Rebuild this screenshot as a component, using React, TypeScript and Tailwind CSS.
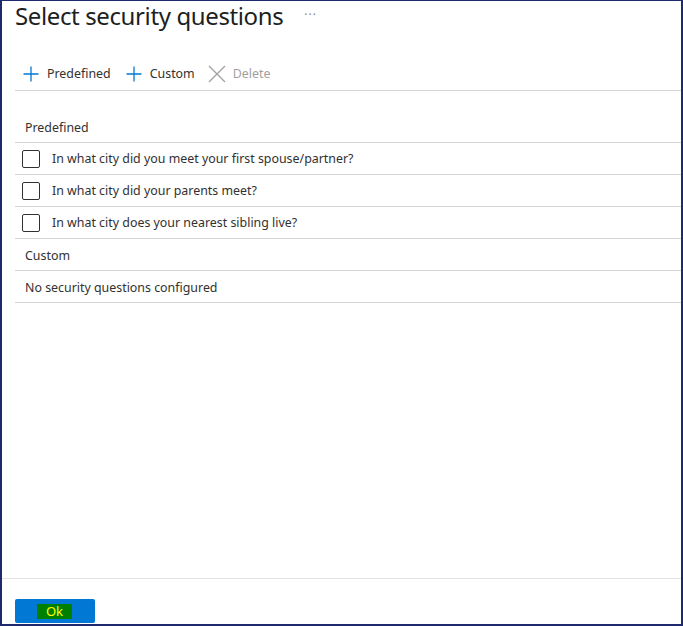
const questions = [
  "In what city did you meet your first spouse/partner?",
  "In what city did your parents meet?",
  "In what city does your nearest sibling live?",
];

const font = { fontFamily: '"Noto Sans", "Open Sans", sans-serif' };

const PlusIcon = () => (
  <svg width="16" height="16" viewBox="0 0 16 16" className="shrink-0">
    <path d="M8 0.5V15.5M0.5 8H15.5" stroke="#0078d4" strokeWidth="1.3" fill="none" />
  </svg>
);

const XIcon = () => (
  <svg width="18" height="18" viewBox="0 0 18 18" className="shrink-0">
    <path d="M1 1L17 17M17 1L1 17" stroke="#a19f9d" strokeWidth="1.2" fill="none" />
  </svg>
);

const App = () => {
  return (
    <div
      className="h-screen w-full flex flex-col bg-white text-[#323130] border-t border-l-2 border-r-2 border-b-2 border-[#1f2a6e] overflow-hidden"
      style={font}
    >
      {/* Header */}
      <div className="flex items-center pl-[13px] h-[30px]">
        <h1 className="text-[24px] leading-[30px] font-normal tracking-[-0.38px] text-[#201f1e] -mt-[1px]">
          Select security questions
        </h1>
        <span className="ml-[21px] text-[12px] text-[#8a8886] tracking-[1px] -mt-[2px]">···</span>
      </div>

      {/* Toolbar */}
      <div className="mt-[25px] ml-[13px] flex items-center h-[35px] border-b border-[#d6d6d6] text-[12.4px]">
        <button className="flex items-center gap-[8px] pl-[8px] pr-[15px] pt-[2px]">
          <PlusIcon />
          <span>Predefined</span>
        </button>
        <button className="flex items-center gap-[8px] pr-[13px] pt-[2px]">
          <PlusIcon />
          <span>Custom</span>
        </button>
        <button className="flex items-center gap-[7px] text-[#a19f9d] pt-[2px]" disabled>
          <XIcon />
          <span>Delete</span>
        </button>
      </div>

      {/* List */}
      <div className="mt-[20px] ml-[13px] text-[12.4px]">
        <div className="h-[32px] flex items-center pl-[10px] pt-[3px] border-b border-[#d6d6d6]">Predefined</div>
        {questions.map((q) => (
          <div key={q} className="h-[32px] flex items-center pl-[7px] border-b border-[#d6d6d6]">
            <span className="w-[18px] h-[18px] border border-[#323130] rounded-[2px] shrink-0" />
            <span className="ml-[12px] pt-[1px]">{q}</span>
          </div>
        ))}
        <div className="h-[32px] flex items-center pl-[10px] pt-[3px] border-b border-[#d6d6d6]">Custom</div>
        <div className="h-[32px] flex items-center pl-[10px] pt-[3px] border-b border-[#d6d6d6]">
          No security questions configured
        </div>
      </div>

      <div className="flex-1" />

      {/* Footer */}
      <div className="border-t border-[#e6e2de] pt-[20px] pb-[1px] pl-[13px]">
        <button className="w-[80px] h-[24px] bg-[#0078d4] rounded-[2px] flex items-center justify-center">
          <span className="bg-[#008000] text-[#ffff00] text-[13px] leading-[15px] w-[35px] h-[15px] flex items-center justify-center -ml-[1px]">
            Ok
          </span>
        </button>
      </div>
    </div>
  );
};

export default App;
